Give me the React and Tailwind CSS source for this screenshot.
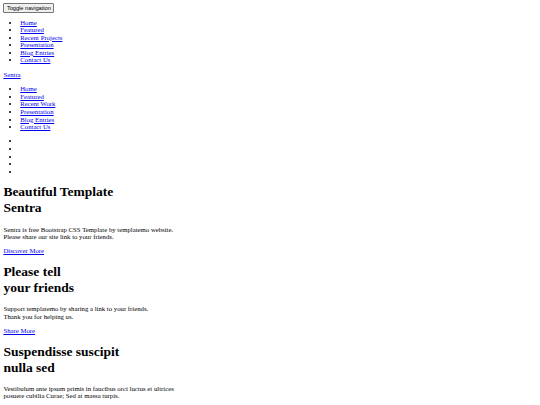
import React from "react";

const NAV_TOP = ["Home", "Featured", "Recent Projects", "Presentation", "Blog Entries", "Contact Us"];
const NAV_MAIN = ["Home", "Featured", "Recent Work", "Presentation", "Blog Entries", "Contact Us"];

const SLIDES = [
  {
    title: ["Beautiful Template", "Sentra"],
    text: ["Sentra is free Bootstrap CSS Template by templatemo website.", "Please share our site link to your friends."],
    link: "Discover More",
  },
  {
    title: ["Please tell", "your friends"],
    text: ["Support templatemo by sharing a link to your friends.", "Thank you for helping us."],
    link: "Share More",
  },
  {
    title: ["Suspendisse suscipit", "nulla sed"],
    text: ["Vestibulum ante ipsum primis in faucibus orci luctus et ultrices", "posuere cubilia Curae; Sed at massa turpis."],
    link: null,
  },
];

function Link({ children }) {
  return <a href="#" className="text-[#0000ee] underline">{children}</a>;
}

function List({ items }) {
  return (
    <ul className="my-[1em] pl-[2.5em] list-disc">
      {items.map((item, i) => (
        <li key={i}>{item ? <Link>{item}</Link> : null}</li>
      ))}
    </ul>
  );
}

export default function App() {
  return (
    <div className="min-h-[405px] bg-white text-black font-['Liberation_Serif',serif] text-[6.75px] leading-[7.6px] p-[3.375px]">
      <div className="h-[8.4px]">
        <button className="font-['Liberation_Sans',Arial,sans-serif] text-[5.65px] leading-[6.6px] bg-[#efefef] border-[0.84px] border-[#767676] rounded-[1px] px-[2.5px] py-[0.45px] text-black">
          Toggle navigation
        </button>
      </div>
      <List items={NAV_TOP} />
      <div>
        <Link>Sentra</Link>
      </div>
      <List items={NAV_MAIN} />
      <List items={["", "", "", "", ""]} />
      {SLIDES.map((s, i) => (
        <section key={i}>
          <h1 className="text-[2em] leading-[16px] font-bold my-[0.67em]">
            {s.title[0]}
            <br />
            {s.title[1]}
          </h1>
          <p className="my-[1em]">
            {s.text[0]}
            <br />
            {s.text[1]}
          </p>
          {s.link && (
            <p className="my-[1em]">
              <Link>{s.link}</Link>
            </p>
          )}
        </section>
      ))}
    </div>
  );
}
